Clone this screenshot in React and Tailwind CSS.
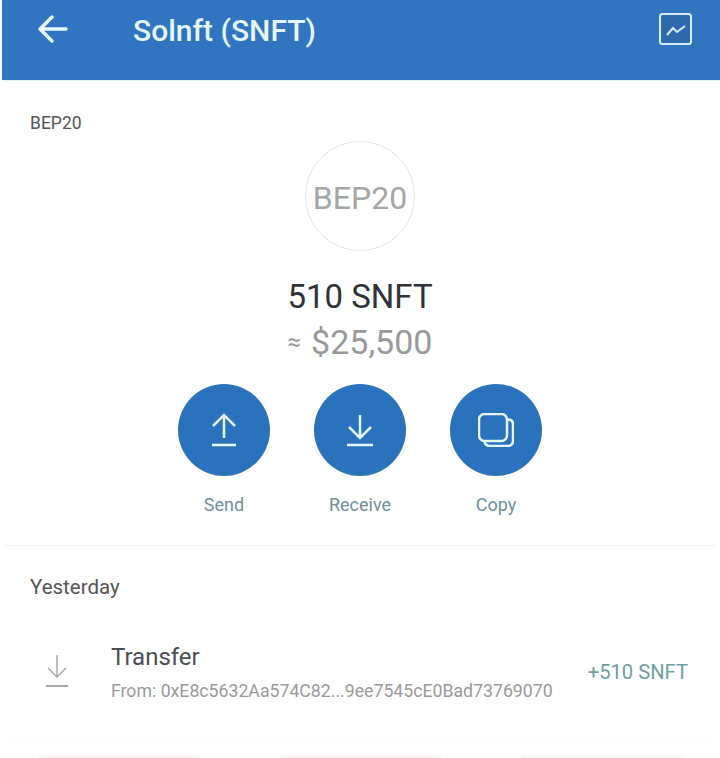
import React from 'react';

const BackIcon = () => (
    <svg viewBox="0 0 30 28" fill="none" stroke="#e8f8fb" strokeWidth={3.5} strokeLinecap="round" strokeLinejoin="round" className="w-[30px] h-7 mt-[2px]">
        <path d="M28 14H2M14 2 2 14l12 12" />
    </svg>
);

const ChartIcon = () => (
    <svg viewBox="0 0 33 32" fill="none" stroke="#d5eef6" strokeWidth={2} className="w-[33px] h-8">
        <rect x="1" y="1" width="31" height="30" rx="2.500" fill="#2f69ad" />
        <path d="M8 22l6-7 4 4 8-6" />
    </svg>
);

const SendIcon = () => (
    <svg viewBox="0 0 26 34" fill="none" stroke="#e4f6fb" strokeWidth={2.5} className="w-[26px] h-[34px]">
        <path d="M13 25V2M2 13 13 2l11 11M1 32h24" />
    </svg>
);

const ReceiveIcon = () => (
    <svg viewBox="0 0 26 34" fill="none" stroke="#e4f6fb" strokeWidth={2.5} className="w-[26px] h-[34px]">
        <path d="M13 2v23M2 14l11 11 11-11M0 32h26" />
    </svg>
);

const CopyIcon = () => (
    <svg viewBox="0 0 36 34" fill="none" stroke="#e4f6fb" strokeWidth={2.5} className="w-9 h-[34px]">
        <rect x="1" y="1" width="28" height="27" rx="5.500" />
        <path d="M29.500 6.500c3.500 0 5.500 1.500 5.500 5v16c0 3.500-2 5.500-5.500 5.500H12c-3.500 0-5-1.500-5.500-4.500" />
    </svg>
);

const TransferIcon = () => (
    <svg viewBox="0 0 24 33" fill="none" stroke="#a9a9a9" strokeWidth={1.5} className="w-6 h-[33px] -mt-[3px]">
        <path d="M12 1v22M3 14l9 9 9-9" />
        <path d="M1 32h22" strokeWidth={2} />
    </svg>
);

const ActionButton = ({ label, children }) => (
    <div className="flex flex-col items-center w-[92px]">
        <div className="w-[92px] h-[92px] rounded-full bg-[#2b72bd] flex items-center justify-center">
            {children}
        </div>
        <span className="mt-[17px] text-[18px] leading-[24px] text-[#6f8f9f]">{label}</span>
    </div>
);

export default function App() {
    return (
        <div className="w-[720px] h-[758px] overflow-hidden bg-white font-['Roboto',sans-serif]">
            <header className="h-[81px] ml-[2px] bg-[#3174c0] flex items-start pt-[13px] pl-[36px] pr-[28px] border-b border-[#dff3f8]">
                <BackIcon />
                <h1 className="ml-[65px] mt-[1px] text-[30px] leading-[34px] font-medium text-[#e4f6fb]">Solnft (SNFT)</h1>
                <div className="ml-auto"><ChartIcon /></div>
            </header>

            <div className="pl-[30px] pt-[32px] text-[17.500px] leading-[20px] text-[#555]">BEP20</div>

            <section className="flex flex-col items-center">
                <div className="mt-[8px] w-[110px] h-[110px] pt-[3px] rounded-full border border-[#e3e3e3] flex items-center justify-center text-[32px] text-[#a6a6a6]">
                    BEP20
                </div>
                <div className="mt-[26px] text-[33px] leading-[40px] text-[#2f3338]">510 SNFT</div>
                <div className="mt-[5px] flex items-center gap-[10px] text-[34px] leading-[40px] text-[#999]">
                    <span className="text-[24px]">≈</span>
                    <span>$25,500</span>
                </div>
                <div className="mt-[22px] flex gap-[44px]">
                    <ActionButton label="Send"><SendIcon /></ActionButton>
                    <ActionButton label="Receive"><ReceiveIcon /></ActionButton>
                    <ActionButton label="Copy"><CopyIcon /></ActionButton>
                </div>
            </section>

            <div className="mt-[28px] mx-[4px] border-t border-[#f4f4f4]" />

            <div className="pl-[30px] pt-[29px] text-[20.500px] leading-[24px] text-[#555]">Yesterday</div>

            <div className="mt-[43px] flex items-center pl-[45px] pr-[32px]">
                <TransferIcon />
                <div className="ml-[42px]">
                    <div className="text-[24px] leading-[30px] text-[#4a4d52]">Transfer</div>
                    <div className="mt-[8px] text-[17.700px] leading-[22px] text-[#9a9a9a]">From: 0xE8c5632Aa574C82...9ee7545cE0Bad73769070</div>
                </div>
                <div className="ml-auto text-[20.200px] leading-[26px] text-[#6e9ea0]">+510 SNFT</div>
            </div>

            <div className="mt-[36px] mx-[4px] border-t border-[#fbfbfb]" />

            <div className="mt-[17px] pl-[39px] flex gap-[80px]">
                <div className="w-[161px] h-[3px] bg-[#f7f3f4]" />
                <div className="w-[161px] h-[3px] bg-[#f7f3f4]" />
                <div className="w-[161px] h-[3px] bg-[#f5f5f6]" />
            </div>
        </div>
    );
}
